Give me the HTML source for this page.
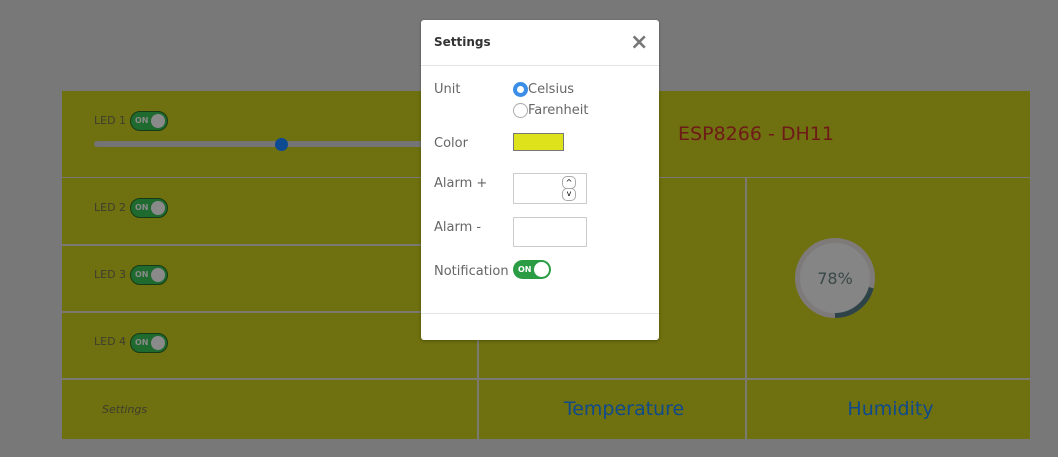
<!DOCTYPE html>
<html><head><style>
body{margin:0;width:1058px;height:457px;background:#787878;position:relative;overflow:hidden;font-family:"DejaVu Sans","Liberation Sans",sans-serif}
.a{position:absolute}
.ol{background:#6f700f}
.ln{background:#7a7a72}
.led{font-size:11px;color:#3e3e2e}
.tg{position:absolute;width:38px;height:20px;border-radius:10px;background:#1f6a2e;border:1px solid #163a16;box-sizing:border-box}
.tg span{position:absolute;left:4px;top:4px;font-size:8px;line-height:10px;font-weight:bold;color:#8a8a8a}
.tg i{position:absolute;right:2px;top:2px;width:14px;height:14px;border-radius:50%;background:#8a8a8a}
.m{font-size:13px;color:#666}
</style></head><body>
<div class="a ol" style="left:62px;top:91px;width:968px;height:348px"></div>
<div class="a ln" style="left:62px;top:177px;width:968px;height:1px"></div>
<div class="a ln" style="left:62px;top:244px;width:416px;height:2px"></div>
<div class="a ln" style="left:62px;top:311px;width:416px;height:2px"></div>
<div class="a ln" style="left:62px;top:378px;width:968px;height:2px"></div>
<div class="a ln" style="left:477px;top:177px;width:2px;height:262px"></div>
<div class="a ln" style="left:745px;top:177px;width:2px;height:262px"></div>

<div class="a led" style="left:94px;top:114px">LED 1</div><div class="tg" style="left:130px;top:111px"><span>ON</span><i></i></div>
<div class="a" style="left:94px;top:141px;width:330px;height:6px;border-radius:3px;background:#747474"></div>
<div class="a" style="left:275px;top:138px;width:13px;height:13px;border-radius:50%;background:#0d4a92"></div>
<div class="a led" style="left:94px;top:201px">LED 2</div><div class="tg" style="left:130px;top:198px"><span>ON</span><i></i></div>
<div class="a led" style="left:94px;top:268px">LED 3</div><div class="tg" style="left:130px;top:265px"><span>ON</span><i></i></div>
<div class="a led" style="left:94px;top:335px">LED 4</div><div class="tg" style="left:130px;top:333px"><span>ON</span><i></i></div>
<div class="a" style="left:102px;top:403px;font-size:11px;font-style:italic;color:#3e3e2e">Settings</div>

<div class="a" style="left:660px;top:123px;width:192px;text-align:center;font-size:19px;color:#6e1a18">ESP8266 - DH11</div>
<div class="a" style="left:491px;top:398px;width:266px;text-align:center;font-size:19px;color:#0e4a8c">Temperature</div>
<div class="a" style="left:749px;top:398px;width:283px;text-align:center;font-size:19px;color:#0e4a8c">Humidity</div>

<svg class="a" style="left:795px;top:238px" width="80" height="80">
<circle cx="40" cy="40" r="37.5" fill="#858585" stroke="#7e7a7a" stroke-width="5"/>
<path d="M76.2 49.7 A37.5 37.5 0 0 1 40 77.5" fill="none" stroke="#2e4348" stroke-width="5"/>
<text x="40" y="46" text-anchor="middle" font-size="16" fill="#3a4848" font-family="DejaVu Sans">78%</text>
</svg>

<div class="a" style="left:421px;top:20px;width:238px;height:320px;background:#fff;border-radius:3px;box-shadow:0 1px 3px rgba(0,0,0,.3)"></div>
<div class="a" style="left:434px;top:35px;font-size:12px;font-weight:bold;color:#333">Settings</div>
<div class="a" style="left:630px;top:30px;font-size:22px;font-weight:bold;color:#777">×</div>
<div class="a" style="left:421px;top:65px;width:238px;height:1px;background:#e5e5e5"></div>
<div class="a" style="left:421px;top:313px;width:238px;height:1px;background:#e5e5e5"></div>

<div class="a m" style="left:434px;top:82px">Unit</div>
<div class="a" style="left:513px;top:82px;width:15px;height:15px;border-radius:50%;background:#3b8ee8"><div class="a" style="left:4px;top:4px;width:7px;height:7px;border-radius:50%;background:#fff"></div></div>
<div class="a m" style="left:528px;top:82px">Celsius</div>
<div class="a" style="left:513px;top:103px;width:13px;height:13px;border-radius:50%;border:1px solid #aaa"></div>
<div class="a m" style="left:528px;top:103px">Farenheit</div>
<div class="a m" style="left:434px;top:136px">Color</div>
<div class="a" style="left:513px;top:133px;width:49px;height:16px;background:#dee21b;border:1px solid #777"></div>
<div class="a m" style="left:434px;top:176px">Alarm +</div>
<div class="a" style="left:513px;top:173px;width:72px;height:29px;border:1px solid #ccc"></div>
<div class="a" style="left:562px;top:176px;width:12px;height:11px;border:1px solid #aaa;border-radius:5px;font-size:8px;text-align:center;line-height:11px">^</div>
<div class="a" style="left:562px;top:188px;width:12px;height:11px;border:1px solid #aaa;border-radius:5px;font-size:8px;text-align:center;line-height:9px">v</div>
<div class="a m" style="left:434px;top:220px">Alarm -</div>
<div class="a" style="left:513px;top:217px;width:72px;height:28px;border:1px solid #ccc"></div>
<div class="a m" style="left:434px;top:264px">Notification</div>
<div class="a" style="left:513px;top:260px;width:38px;height:19px;border-radius:10px;background:#2a9d44"><span class="a" style="left:5px;top:5px;font-size:8px;line-height:10px;font-weight:bold;color:#fff">ON</span><i class="a" style="right:2px;top:2px;width:15px;height:15px;border-radius:50%;background:#fff"></i></div>
</body></html>
